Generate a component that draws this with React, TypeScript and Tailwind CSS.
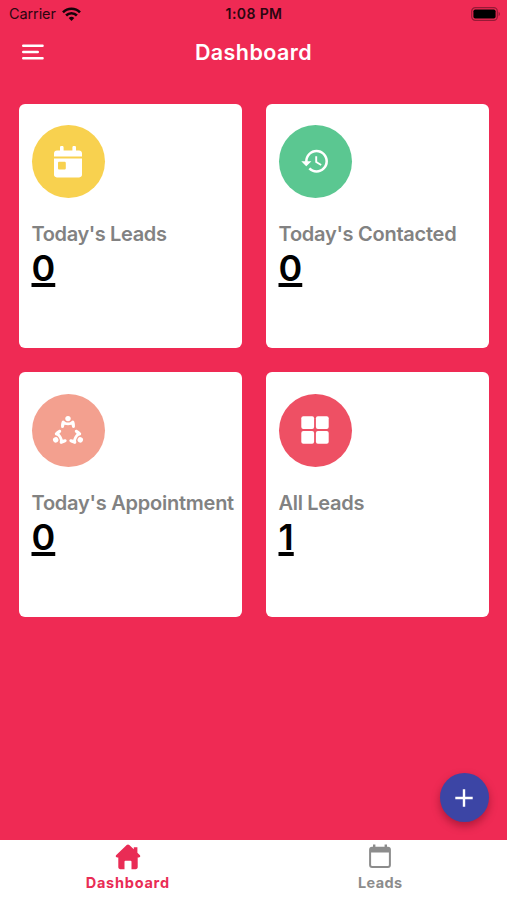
import type { ReactNode } from "react";
import { MdHistory } from "react-icons/md";

type Stat = {
  label: string;
  labelClass: string;
  value: number;
  circle: string;
  icon: ReactNode;
};

const STATS: Stat[] = [
  {
    label: "Today's Leads",
    labelClass: "tracking-[-0.38px]",
    value: 0,
    circle: "bg-[#f8d14f]",
    icon: <CalendarSolid />,
  },
  {
    label: "Today's Contacted",
    labelClass: "tracking-[-0.26px]",
    value: 0,
    circle: "bg-[#5bc791]",
    icon: <MdHistory size={30.5} aria-hidden="true" />,
  },
  {
    label: "Today's Appointment",
    labelClass: "tracking-[-0.24px]",
    value: 0,
    circle: "bg-[#f3a08f]",
    icon: <PeopleCircle />,
  },
  {
    label: "All Leads",
    labelClass: "tracking-[-0.3px]",
    value: 1,
    circle: "bg-[#ee5064]",
    icon: <GridSolid />,
  },
];

export default function App() {
  return (
    <div className="flex h-[900px] w-[507px] flex-col overflow-hidden bg-[#ef2a54] font-['Inter',sans-serif]">
      <StatusBar />
      <Header />

      <main className="flex flex-1 flex-col justify-between pt-[26.5px] pr-[18px] pb-[18px] pl-[19px]">
        <div className="grid grid-cols-2 gap-6">
          {STATS.map((stat) => (
            <StatCard key={stat.label} stat={stat} />
          ))}
        </div>

        <button
          type="button"
          aria-label="Add lead"
          className="flex size-[49px] items-center justify-center self-end rounded-full bg-[#3c45a5] pr-px shadow-[0_4px_9px_rgba(80,0,20,0.4)]"
        >
          <svg width="18" height="18" viewBox="0 0 18 18" fill="none" stroke="#fff" strokeWidth="2.4">
            <path d="M9 .3v17.4M.3 9h17.4" />
          </svg>
        </button>
      </main>

      <TabBar />
    </div>
  );
}

function StatusBar() {
  return (
    <div className="grid h-[27px] grid-cols-3 items-center pr-[6px] pl-[9px] text-[14.5px] leading-none text-[#2b0610]">
      <div className="flex items-center gap-[6px]">
        <span className="pt-px tracking-[-0.1px]">Carrier</span>
        <svg width="19" height="14" viewBox="0 0 19 14" fill="none" stroke="#160309" strokeWidth="2.6">
          <path d="M1 5.3a12 12 0 0 1 17 0" />
          <path d="M4.1 8.5a7.6 7.6 0 0 1 10.8 0" />
          <path d="M9.5 14 6.7 11a4 4 0 0 1 5.6 0Z" fill="#160309" stroke="none" />
        </svg>
      </div>
      <span className="pr-[2px] text-center text-[14px] font-semibold tracking-[0.4px]">1:08 PM</span>
      <svg className="justify-self-end" width="30" height="14" viewBox="0 0 30 14">
        <rect x=".7" y=".7" width="25.6" height="12.6" rx="3.6" fill="none" stroke="#961a36" strokeWidth="1.2" />
        <rect x="2.4" y="2.4" width="22.2" height="9.2" rx="1.8" fill="#000" />
        <path d="M27.6 4.8c1.8.7 1.8 3.7 0 4.4Z" fill="#961a36" />
      </svg>
    </div>
  );
}

function Header() {
  return (
    <header className="grid h-[50px] grid-cols-3 items-center pr-[22px] pl-[22px]">
      <svg width="22" height="16" viewBox="0 0 22 16" stroke="#fff" strokeWidth="2.4" strokeLinecap="round">
        <path d="M1.2 1.8h19.4M1.2 8h14.6M1.2 14.2h19.4" />
      </svg>
      <h1 className="justify-self-center text-[21.5px] font-semibold tracking-[0.42px] text-white">
        Dashboard
      </h1>
    </header>
  );
}

function StatCard({ stat }: { stat: Stat }) {
  return (
    <section className="flex h-[244.8px] flex-col rounded-[6px] bg-white pt-[21.3px] pl-[12.5px]">
      <div
        className={`flex size-[73.5px] shrink-0 items-center justify-center rounded-full text-white ${stat.circle}`}
      >
        {stat.icon}
      </div>
      <h2
        className={`mt-[24px] text-[20px] leading-[25px] font-semibold whitespace-nowrap text-[#828282] ${stat.labelClass}`}
      >
        {stat.label}
      </h2>
      <span className="-mt-px self-start text-[36px] leading-[44px] font-semibold text-black underline decoration-[3.5px] underline-offset-[2px] [text-decoration-skip-ink:none]">
        {stat.value}
      </span>
    </section>
  );
}

function TabBar() {
  return (
    <nav className="grid h-[60px] shrink-0 grid-cols-2 bg-white text-[14.5px] font-bold">
      <a className="flex flex-col items-center pt-[4px] pl-[2px] text-[#e92c55]">
        <svg width="26" height="26" viewBox="0 0 26 26" fill="currentColor" aria-hidden="true">
          <path d="M11.7 1a1.9 1.9 0 0 1 2.6 0l4.5 4.3V3.2h3.6v5.5l2.3 2.4c1 1.1.5 2.3-.9 2.3h-1.1v9.7c0 1.3-.8 2.1-2.1 2.1h-4.1v-7.5c0-.6-.3-.9-.9-.9h-5.2c-.6 0-.9.3-.9.9v7.5H5.4c-1.3 0-2.1-.8-2.1-2.1v-9.7H2.2c-1.4 0-1.9-1.2-.9-2.3Z" />
        </svg>
        <span className="mt-[3px] leading-5 tracking-[0.75px]">Dashboard</span>
      </a>
      <a className="flex flex-col items-center pt-[4px] text-[#8c8c8c]">
        <svg width="22" height="26" viewBox="0 0 22 26" aria-hidden="true">
          <rect x="1.1" y="3.7" width="19.8" height="19.2" rx="2" fill="none" stroke="currentColor" strokeWidth="2" />
          <path d="M1 4h20v4.4H1ZM4 .6h2.4v4H4ZM15.6.6H18v4h-2.4Z" fill="currentColor" />
        </svg>
        <span className="mt-[3px] leading-5 tracking-[0.4px]">Leads</span>
      </a>
    </nav>
  );
}

function CalendarSolid() {
  return (
    <svg width="28" height="32" viewBox="0 0 28 32" fill="currentColor" aria-hidden="true">
      <path d="M0 10.6V7.4C0 5.5 1.2 4.4 3 4.4h3V1.6a1.8 1.8 0 0 1 3.6 0v2.8h8.8V1.6a1.8 1.8 0 0 1 3.6 0v2.8h3c1.8 0 3 1.1 3 3v3.2Z" />
      <path
        fillRule="evenodd"
        d="M0 12.4h28v16.2c0 1.8-1 2.8-2.8 2.8H2.8C1 31.4 0 30.4 0 28.6Zm5.4 3.4c-.9 0-1.4.5-1.4 1.4v5c0 .9.5 1.4 1.4 1.4h5c.9 0 1.4-.5 1.4-1.4v-5c0-.9-.5-1.4-1.4-1.4Z"
      />
    </svg>
  );
}

function PeopleCircle() {
  return (
    <svg width="32" height="32" viewBox="0 0 32 32" fill="currentColor" aria-hidden="true">
      {[0, 120, 240].map((angle) => (
        <g key={angle} transform={`rotate(${angle} 16 18.8)`}>
          <circle cx="16" cy="4.6" r="2.7" />
          <path d="M9.9 7.2c.8-.9 1.9-.7 2.6.1.7.9 1.9 1.2 3.5 1.2s2.8-.3 3.5-1.2c.7-.8 1.8-1 2.6-.1.7 1.7 1 3.7.8 5.5-.2 1.5-2.4 1.6-2.8.2l-.6-2.1c-2.1.6-4.9.6-7 0l-.6 2.1c-.4 1.4-2.6 1.3-2.8-.2-.2-1.8.1-3.8.8-5.5Z" />
        </g>
      ))}
    </svg>
  );
}

function GridSolid() {
  return (
    <svg width="28" height="28" viewBox="0 0 28 28" fill="currentColor" aria-hidden="true">
      <rect x=".3" y=".3" width="12.8" height="12.8" rx="2" />
      <rect x="14.9" y=".3" width="12.8" height="12.8" rx="2" />
      <rect x=".3" y="14.9" width="12.8" height="12.8" rx="2" />
      <rect x="14.9" y="14.9" width="12.8" height="12.8" rx="2" />
    </svg>
  );
}
